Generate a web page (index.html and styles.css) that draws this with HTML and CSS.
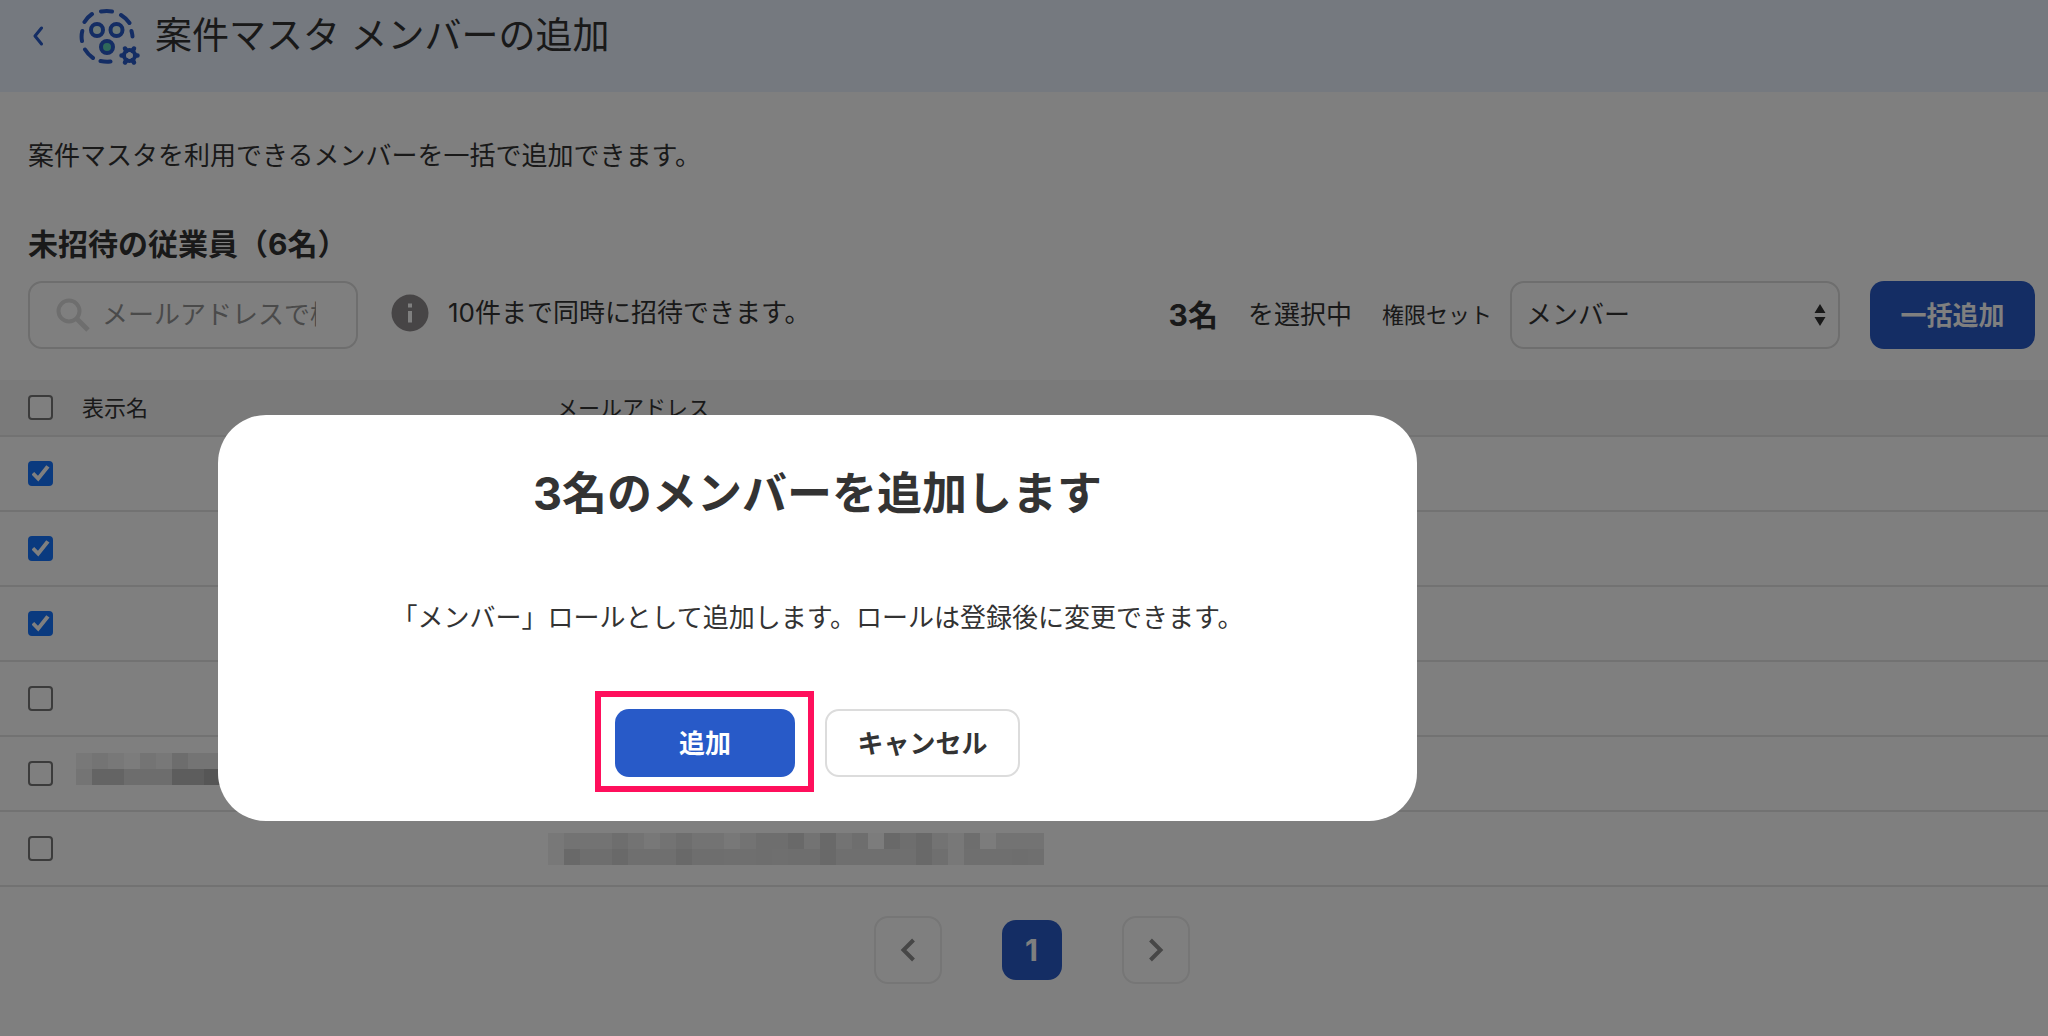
FILE: index.html
```html
<!DOCTYPE html>
<html lang="ja">
<head>
<meta charset="utf-8">
<meta name="viewport" content="width=device-width, initial-scale=1">
<title>案件マスタ メンバーの追加</title>
<link rel="stylesheet" href="styles.css">
</head>
<body>
<header class="page-header">
  <a class="back" href="#" aria-label="戻る">
    <svg width="12" height="20" viewBox="0 0 12 20" fill="none" stroke="#285ac8" stroke-width="3" stroke-linecap="round" stroke-linejoin="round"><path d="M9.500 2 3 10l6.500 8"/></svg>
  </a>
  <svg class="app-icon" width="62" height="58" viewBox="0 0 62 58" fill="none" stroke="#285ac8" stroke-width="4">
    <g stroke-linecap="round">
      <path d="M22 3.500q6-1 11 0M42 7q5 3 8.500 8M52.500 23q1 4 1 5.500M21.500 53q5 1 10 .5M6 41.500q3 5 8 8.500M3 33q-1-5 .3-10M5.500 14q3-5 7.500-8"/>
    </g>
    <circle cx="18" cy="22" r="6" fill="#d8f0ec"/>
    <circle cx="37.500" cy="22" r="6" fill="#d8f0ec"/>
    <circle cx="28" cy="39" r="6" fill="#5fd2b4"/>
    <circle cx="50.500" cy="47.500" r="5.500"/>
    <path stroke-linecap="round" stroke-width="4.500" d="M46 40.500l1.500 2.500M55 40.500l-1.500 2.500M58.500 47.500h-2M55 54.500l-1.500-2.500M46 54.500l1.500-2.500M42.500 47.500h2"/>
  </svg>
  <h1 class="page-title">案件マスタ メンバーの追加</h1>
</header>

<main class="content">
  <p class="lead">案件マスタを利用できるメンバーを一括で追加できます。</p>
  <h2 class="section-title">未招待の従業員（6名）</h2>

  <div class="toolbar">
    <label class="search">
      <svg width="34" height="34" viewBox="0 0 34 34" fill="none" stroke="#dcdcdc" stroke-width="4"><circle cx="13" cy="13" r="10.500"/><path d="M20.500 20.500 32 32" stroke-width="5"/></svg>
      <input type="text" placeholder="メールアドレスで検索" aria-label="メールアドレスで検索">
    </label>
    <p class="hint">
      <svg width="38" height="38" viewBox="0 0 38 38"><circle cx="19" cy="19" r="18.500" fill="#8e8a8c"/><path d="M17 9.500h4v4h-4zM17 17h4v11.500h-4z" fill="#fff"/></svg>
      10件まで同時に招待できます。
    </p>
    <div class="bulk">
      <strong class="count">3名</strong>
      <span class="selected">を選択中</span>
      <label class="role-label" for="role">権限セット</label>
      <span class="select-box">
        <select id="role"><option>メンバー</option></select>
        <svg class="select-arrows" width="12" height="24" viewBox="0 0 12 24" fill="#333"><path d="M6 1l5.500 9H.5zM6 23l5.500-9H.5z"/></svg>
      </span>
      <button class="btn btn-primary btn-bulk" type="button">一括追加</button>
    </div>
  </div>

  <table class="members">
    <thead>
      <tr><th class="col-check"><input type="checkbox" aria-label="すべて選択"></th><th class="col-name">表示名</th><th>メールアドレス</th></tr>
    </thead>
    <tbody>
      <tr><td class="col-check"><input type="checkbox" aria-label="従業員1" checked></td><td></td><td></td></tr>
      <tr><td class="col-check"><input type="checkbox" aria-label="従業員2" checked></td><td></td><td></td></tr>
      <tr><td class="col-check"><input type="checkbox" aria-label="従業員3" checked></td><td></td><td></td></tr>
      <tr><td class="col-check"><input type="checkbox" aria-label="従業員4"></td><td></td><td></td></tr>
      <tr><td class="col-check"><input type="checkbox" aria-label="従業員5"></td><td class="masked-name">
        <svg class="mask" width="160" height="32" viewBox="0 0 10 2" shape-rendering="crispEdges">
          <path fill="#f0f0f0" d="M0 0h1v1H0zM2 0h1v1H2zM5 0h1v1H5z"/><path fill="#e8e8e8" d="M1 0h1v1H1zM4 0h1v1H4zM7 0h3v1H7zM0 1h1v1H0z"/><path fill="#f8f8f8" d="M3 0h1v1H3z"/><path fill="#dadada" d="M6 0h1v1H6zM3 1h3v1H3z"/><path fill="#c8c8c8" d="M1 1h2v1H1z"/><path fill="#bababa" d="M6 1h2v1H6z"/><path fill="#acacac" d="M8 1h2v1H8z"/>
        </svg></td><td></td></tr>
      <tr><td class="col-check"><input type="checkbox" aria-label="従業員6"></td><td></td><td class="masked-mail">
        <svg class="mask" width="496" height="32" viewBox="0 0 31 2" shape-rendering="crispEdges">
          <path fill="#e6e6e6" d="M0 0h31v1H0z"/><path fill="#dfdfdf" d="M0 1h31v1H0z"/>
          <path fill="#f0f0f0" d="M0 0h1v1H0zM6 0h1v1H6zM11 0h1v1h-1zM25 0h1v1h-1zM0 1h1v1H0zM25 1h1v1h-1z"/>
          <path fill="#f8f8f8" d="M20 0h1v1h-1zM27 0h1v1h-1z"/>
          <path fill="#dcdcdc" d="M4 0h1v1H4zM8 0h1v1H8zM13 0h2v1h-2zM19 0h1v1h-1zM22 0h1v1h-1zM26 0h1v1h-1zM2 1h2v1H2zM9 1h2v1H9zM13 1h1v1h-1zM15 1h2v1h-2zM29 1h1v1h-1z"/>
          <path fill="#d2d2d2" d="M15 0h1v1h-1zM17 0h1v1h-1zM21 0h1v1h-1zM23 0h1v1h-1zM1 1h1v1H1zM4 1h1v1H4zM8 1h1v1H8zM17 1h1v1h-1zM23 1h1v1h-1z"/>
        </svg></td></tr>
    </tbody>
  </table>

  <nav class="pager" aria-label="ページ送り">
    <button class="pager-step" type="button" aria-label="前へ"><svg width="16" height="24" viewBox="0 0 16 24" fill="none" stroke="#8e8e8e" stroke-width="4"><path d="M13.500 2 3.500 12l10 10"/></svg></button>
    <button class="pager-current" type="button" aria-current="page">1</button>
    <button class="pager-step" type="button" aria-label="次へ"><svg width="16" height="24" viewBox="0 0 16 24" fill="none" stroke="#8e8e8e" stroke-width="4"><path d="M2.500 2l10 10-10 10"/></svg></button>
  </nav>
</main>

<div class="overlay">
  <section class="modal" role="dialog" aria-modal="true" aria-labelledby="modal-title">
    <h2 class="modal-title" id="modal-title">3名のメンバーを追加します</h2>
    <p class="modal-text">「メンバー」ロールとして追加します。ロールは登録後に変更できます。</p>
    <div class="modal-actions">
      <span class="callout"><button class="btn btn-primary btn-add" type="button">追加</button></span>
      <button class="btn btn-cancel" type="button">キャンセル</button>
    </div>
  </section>
</div>
</body>
</html>
```
FILE: styles.css
```css
* { box-sizing: border-box; }

body {
  margin: 0;
  min-height: 100vh;
  background: #fff;
  color: #333;
  font-family: Inter, "Noto Sans CJK JP", sans-serif;
  font-size: 26px;
  line-height: 40px;
}

h1, h2, p { margin: 0; }
button, input, select { font: inherit; color: inherit; }
svg { display: block; flex: none; }

.page-header {
  display: flex;
  align-items: flex-start;
  padding: 8px 28px 26px 32px;
  background: #ebf3ff;
}
.back { padding-top: 18px; margin-right: 35px; }
.page-title {
  margin-left: 14px;
  font-size: 37px;
  line-height: 56px;
  font-weight: 400;
}

.content { padding-top: 44px; }
.lead { padding: 0 28px; }
.section-title {
  margin-top: 48px;
  padding: 0 28px;
  font-size: 30px;
  font-weight: 700;
}

.toolbar {
  display: flex;
  align-items: center;
  margin-top: 17px;
  padding: 0 13px 0 28px;
}
.search {
  display: flex;
  align-items: center;
  gap: 12px;
  width: 330px;
  height: 68px;
  padding: 0 40px 0 26px;
  border: 2px solid #dcdcdc;
  border-radius: 14px;
}
.search input {
  flex: 1;
  min-width: 0;
  padding: 0;
  border: 0;
  outline: 0;
  background: none;
}
.search input::placeholder { color: #949494; opacity: 1; }
.hint {
  display: flex;
  align-items: center;
  gap: 19px;
  margin-left: 33px;
  padding-bottom: 4px;
}
.bulk {
  display: flex;
  align-items: center;
  margin-left: auto;
}
.count { font-size: 30px; }
.selected { margin-left: 30px; }
.role-label { margin: 0 18px 0 30px; font-size: 22px; }
.select-box { position: relative; width: 330px; }
.select-box select {
  display: block;
  width: 100%;
  height: 68px;
  padding: 0 40px 0 14px;
  appearance: none;
  border: 2px solid #dcdcdc;
  border-radius: 14px;
  background: #fff;
}
.select-arrows {
  position: absolute;
  right: 14px;
  top: 22px;
  pointer-events: none;
}

.btn {
  height: 68px;
  padding: 2px 0 0;
  border: 0;
  border-radius: 14px;
  font-weight: 700;
}
.btn-primary { background: #285ac8; color: #fff; }
.btn-bulk { width: 165px; margin-left: 30px; }

.members {
  width: 100%;
  margin-top: 31px;
  table-layout: fixed;
  border-collapse: separate;
  border-spacing: 0;
}
.members th,
.members td {
  padding: 0;
  border-bottom: 2px solid #e4e4e4;
  text-align: left;
  vertical-align: middle;
}
.members th {
  height: 57px;
  background: #f4f4f4;
  font-size: 22px;
  font-weight: 400;
  line-height: 32px;
}
.members td { height: 75px; }
.members .col-check { width: 82px; padding-left: 28px; }
.col-name { width: 474px; }
.members .masked-name { padding-bottom: 10px; }
.members .masked-name .mask { margin-left: -6px; }
.members .masked-mail .mask { margin-left: -8px; }

input[type="checkbox"] {
  display: grid;
  place-items: center;
  width: 25px;
  height: 25px;
  margin: 0;
  appearance: none;
  border: 2px solid #767676;
  border-radius: 4px;
  background: #fff;
}
input[type="checkbox"]:checked { border-color: #1474ff; background: #1474ff; }
input[type="checkbox"]:checked::before {
  content: "";
  width: 18px;
  height: 18px;
  background: #fff;
  clip-path: polygon(0 56%, 15% 42%, 36% 62%, 82% 4%, 100% 16%, 38% 94%);
}

.pager {
  display: flex;
  justify-content: center;
  align-items: center;
  gap: 60px;
  padding: 29px 0 48px 15px;
}
.pager button {
  display: grid;
  place-items: center;
  padding: 0;
  border-radius: 14px;
}
.pager .pager-step {
  width: 68px;
  height: 68px;
  border: 2px solid #ececec;
  background: #fff;
}
.pager .pager-current {
  width: 60px;
  height: 60px;
  border: 0;
  background: #285ac8;
  color: #fff;
  font-size: 30px;
  font-weight: 700;
}

.overlay {
  position: fixed;
  inset: 0;
  padding: 415px 24px 24px 218px;
  background: rgba(0, 0, 0, .5);
}
.modal {
  max-width: 1199px;
  padding: 39px 24px 44px;
  border-radius: 48px;
  background: #fff;
  text-align: center;
}
.modal-title { font-size: 45px; line-height: 80px; font-weight: 700; }
.modal-text { margin-top: 64px; }
.modal-actions {
  display: flex;
  justify-content: center;
  gap: 30px;
  margin-top: 71px;
}
.callout { position: relative; }
.callout::after {
  content: "";
  position: absolute;
  inset: -18px -19px -15px -20px;
  border: 6px solid #ff0f5c;
  pointer-events: none;
}
.btn-add { display: block; width: 180px; }
.btn-cancel { width: 195px; border: 2px solid #dcdcdc; background: #fff; }
```
